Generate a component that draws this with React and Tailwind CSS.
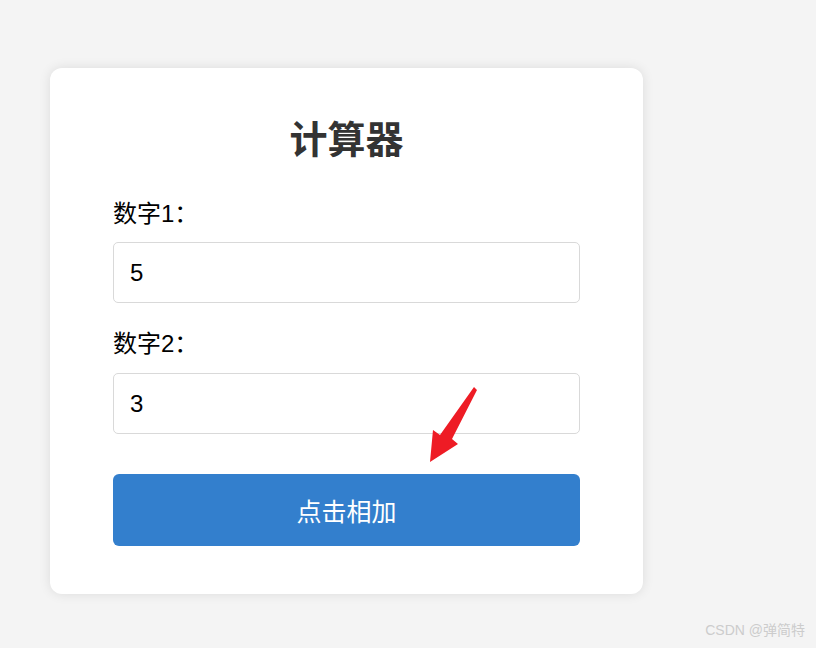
import React, { useState } from 'react';

export default function App() {
    const [a, setA] = useState('5');
    const [b, setB] = useState('3');

    return (
        <div
            className="relative min-h-[648px] w-full bg-[#f4f4f4] pt-[68px] pl-[50px]"
            style={{ fontFamily: '"Liberation Sans", "Noto Sans CJK SC", sans-serif' }}
        >
            {/* Card */}
            <div className="w-[593px] rounded-[12px] bg-white px-[63px] pt-[48px] pb-[48px] shadow-[0_0_12px_rgba(0,0,0,0.1)]">
                <h2 className="text-center text-[38px] leading-[48px] font-bold text-[#333]">计算器</h2>

                <div className="mt-[35px]">
                    <label className="block text-[24px] leading-[30px] text-black mb-[13px]">数字1：</label>
                    <input
                        value={a}
                        onChange={(e) => setA(e.target.value)}
                        className="block w-full h-[61px] rounded-[5px] border border-[#d9d9d9] px-[16px] text-[24px] text-black outline-none"
                    />
                </div>

                <div className="mt-[26px]">
                    <label className="block text-[24px] leading-[30px] text-black mb-[14px]">数字2：</label>
                    <input
                        value={b}
                        onChange={(e) => setB(e.target.value)}
                        className="block w-full h-[61px] rounded-[5px] border border-[#d9d9d9] px-[16px] text-[24px] text-black outline-none"
                    />
                </div>

                <button className="mt-[40px] block w-full h-[72px] rounded-[6px] bg-[#337fcd] pt-[5px] text-[25px] text-white">
                    点击相加
                </button>
            </div>

            {/* annotation arrow */}
            <svg className="absolute left-0 top-0 pointer-events-none" width="816" height="648">
                <polygon
                    points="474,387 477,390 452,439 458,444 430,462 433,430 440,435"
                    fill="#ee1c25"
                />
            </svg>

            {/* watermark */}
            <div className="absolute right-[11px] bottom-[7px] text-[14px] text-[#cccccc]">
                CSDN @弹简特
            </div>
        </div>
    );
}
